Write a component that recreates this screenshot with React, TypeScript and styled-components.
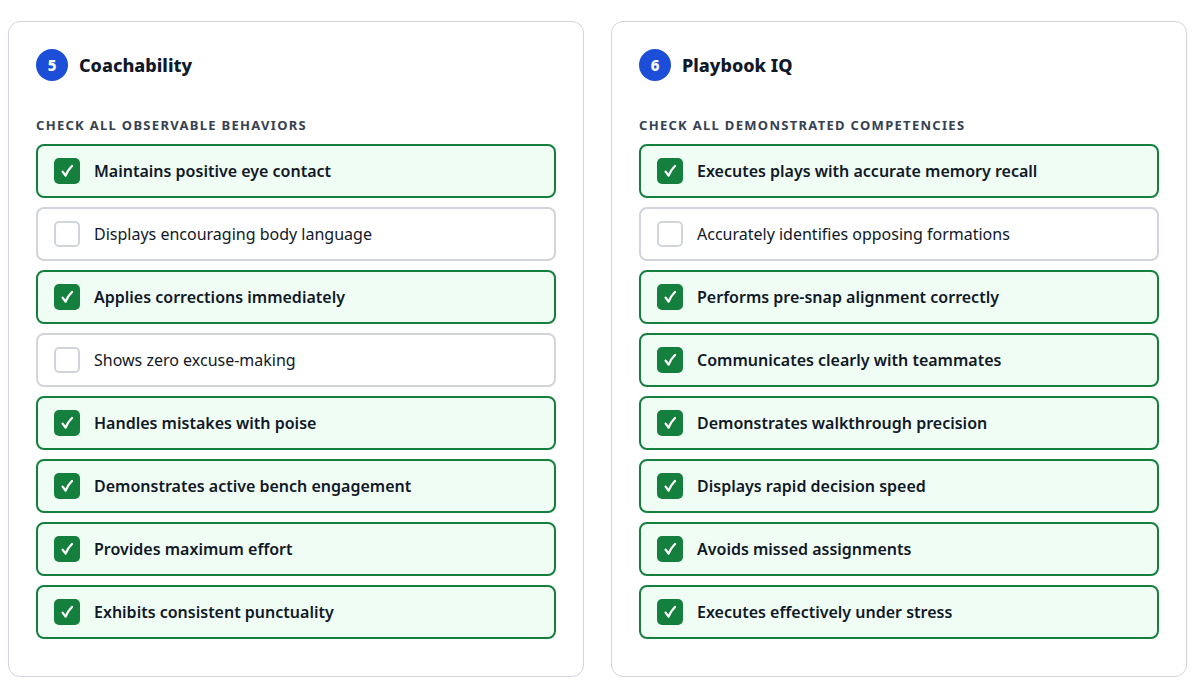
import React from "react";
import styled, { createGlobalStyle } from "styled-components";

const GlobalStyle = createGlobalStyle`
  body {
    margin: 8px;
    background: #ffffff;
    font-family: "Noto Sans", "Open Sans", sans-serif;
    color: #111827;
  }
`;

interface Behavior {
  label: string;
  checked: boolean;
}

interface Section {
  number: number;
  title: string;
  caption: string;
  items: Behavior[];
}

const sections: Section[] = [
  {
    number: 5,
    title: "Coachability",
    caption: "Check all observable behaviors",
    items: [
      { label: "Maintains positive eye contact", checked: true },
      { label: "Displays encouraging body language", checked: false },
      { label: "Applies corrections immediately", checked: true },
      { label: "Shows zero excuse-making", checked: false },
      { label: "Handles mistakes with poise", checked: true },
      { label: "Demonstrates active bench engagement", checked: true },
      { label: "Provides maximum effort", checked: true },
      { label: "Exhibits consistent punctuality", checked: true },
    ],
  },
  {
    number: 6,
    title: "Playbook IQ",
    caption: "Check all demonstrated competencies",
    items: [
      { label: "Executes plays with accurate memory recall", checked: true },
      { label: "Accurately identifies opposing formations", checked: false },
      { label: "Performs pre-snap alignment correctly", checked: true },
      { label: "Communicates clearly with teammates", checked: true },
      { label: "Demonstrates walkthrough precision", checked: true },
      { label: "Displays rapid decision speed", checked: true },
      { label: "Avoids missed assignments", checked: true },
      { label: "Executes effectively under stress", checked: true },
    ],
  },
];

// brush-style tick drawn inside a checked box
const Tick = () => (
  <svg width="14" height="14" viewBox="0 0 14 14" fill="none">
    <path
      d="M2.6 7.6 L5.6 11.6 Q8 5.8 12 2"
      stroke="#ffffff"
      strokeWidth="2.3"
      strokeLinecap="round"
      strokeLinejoin="round"
    />
  </svg>
);

const App = () => {
  return (
    <>
      <GlobalStyle />
      <Grid>
        {sections.map((section) => (
          <Card key={section.number}>
            <Header>
              <Badge>{section.number}</Badge>
              <Title>{section.title}</Title>
            </Header>
            <Caption>{section.caption}</Caption>
            <List>
              {section.items.map((item) => (
                <Row key={item.label} checked={item.checked}>
                  <Box checked={item.checked}>{item.checked && <Tick />}</Box>
                  <Label checked={item.checked}>{item.label}</Label>
                </Row>
              ))}
            </List>
          </Card>
        ))}
      </Grid>
    </>
  );
};

const Grid = styled.div`
  display: grid;
  grid-template-columns: 1fr 1fr;
  gap: 27px;
  padding-top: 13px;
  padding-right: 3px;
`;

const Card = styled.section`
  border: 1px solid #d1d5db;
  border-radius: 12px;
  padding: 27px 27px 37px;
  background: #ffffff;
`;

const Header = styled.div`
  display: flex;
  align-items: center;
  gap: 11px;
`;

const Badge = styled.div`
  width: 32px;
  height: 32px;
  border-radius: 50%;
  background: #1d4ed8;
  color: #ffffff;
  display: flex;
  align-items: center;
  justify-content: center;
  font-size: 15px;
  font-weight: 800;
`;

const Title = styled.h2`
  margin: 0;
  font-size: 18px;
  font-weight: 800;
  color: #111827;
`;

const Caption = styled.div`
  margin-top: 35px;
  margin-bottom: 10px;
  font-size: 13px;
  font-weight: 700;
  letter-spacing: 1.3px;
  text-transform: uppercase;
  color: #374151;
`;

const List = styled.div`
  display: flex;
  flex-direction: column;
  gap: 9px;
`;

interface CheckProps {
  checked: boolean;
}

const Row = styled.div<CheckProps>`
  display: flex;
  align-items: center;
  gap: 14px;
  height: 54px;
  box-sizing: border-box;
  padding: 0 16px;
  border-radius: 8px;
  border: 2px solid ${({ checked }) => (checked ? "#15803d" : "#d1d5db")};
  background: ${({ checked }) => (checked ? "#f0fdf4" : "#ffffff")};
`;

const Box = styled.span<CheckProps>`
  width: 26px;
  height: 26px;
  box-sizing: border-box;
  border-radius: 5px;
  flex-shrink: 0;
  display: flex;
  align-items: center;
  justify-content: center;
  background: ${({ checked }) => (checked ? "#15803d" : "#ffffff")};
  border: ${({ checked }) => (checked ? "none" : "2px solid #d1d5db")};
`;

const Label = styled.span<CheckProps>`
  font-size: 16px;
  font-weight: ${({ checked }) => (checked ? 600 : 400)};
  color: #111827;
`;

export default App;
